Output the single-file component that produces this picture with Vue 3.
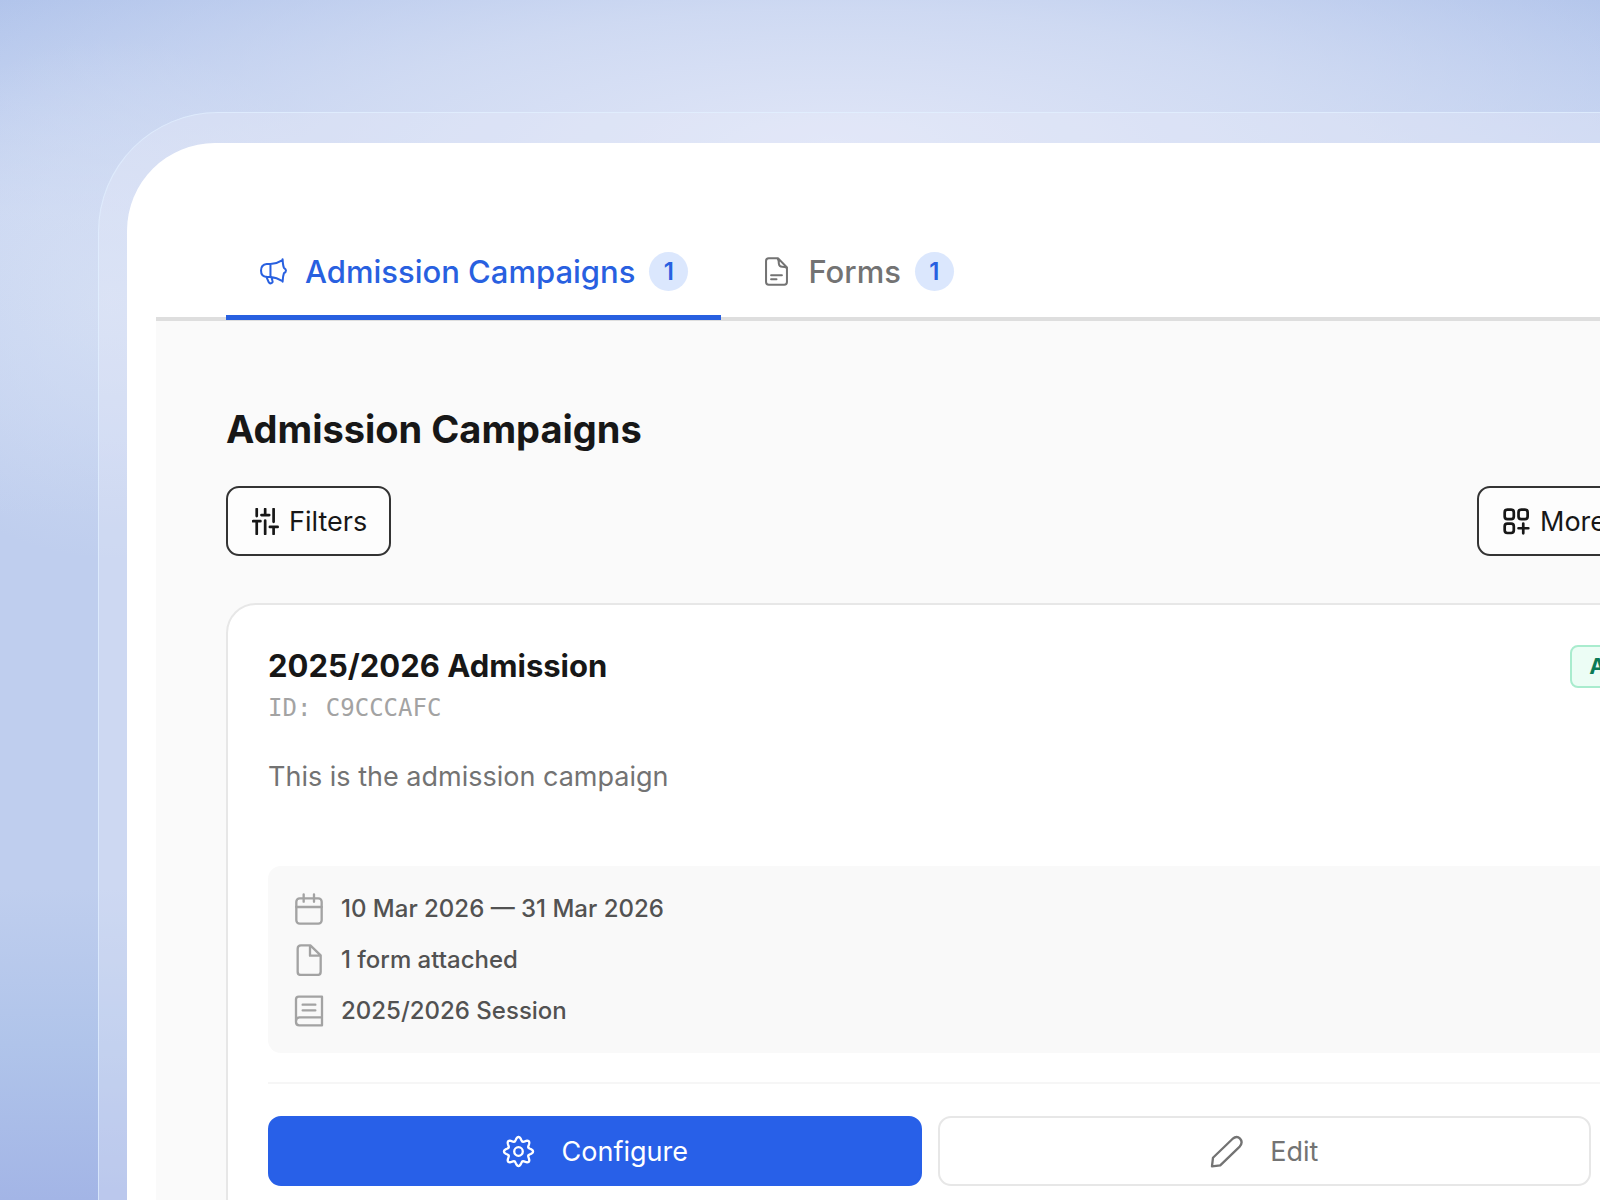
<template>
  <div class="stage">
    <div class="frame">
      <div class="window">
        <nav class="tabs">
          <button
            v-for="tab in tabs"
            :key="tab.name"
            type="button"
            class="tab"
            :class="{ active: tab.name === activeTab }"
            @click="activeTab = tab.name"
          >
            <svg v-if="tab.icon === 'megaphone'" class="icon-tab" viewBox="-4 -6 86 86">
              <path d="M30 15 H19 Q2 17 2 34 Q2 52 19 53 H30 Q48 54 66 66 M30 15 Q48 14 66 3 M30 15 V53 M66 1 Q67 20 70 26 Q76 30 76 34 Q76 39 70 42 Q67 50 66 67 M18 53 L25 69 Q28 74 34 71 Q38 68 36 64 L32 53" />
            </svg>
            <svg v-else class="icon-tab" viewBox="-10 -2 86 86">
              <path d="M10 2 H38 L64 29 V72 Q64 80 56 80 H10 Q2 80 2 72 V10 Q2 2 10 2 Z M36 3 Q40 6 40 18 Q41 27 50 27 Q61 27 63 31 M17 52 H49 M17 64 H33" />
            </svg>
            <span>{{ tab.name }}</span>
            <span class="count">{{ tab.count }}</span>
          </button>
        </nav>

        <main class="content">
          <h1>Admission Campaigns</h1>

          <div class="toolbar">
            <button type="button" class="tool">
              <svg class="icon-tool" viewBox="-3 -3 80 80">
                <path d="M11 0 V21 M0 36 H22 M11 36 V74 M36 0 V18 M25 18 H48 M36 34 V74 M61 0 V38 M50 53 H73 M61 53 V74" />
              </svg>
              Filters
            </button>
            <button type="button" class="tool more">
              <svg class="icon-tool" viewBox="-3 -3 80 80">
                <rect x="2" y="2" width="27" height="28" rx="8" />
                <rect x="43" y="2" width="27" height="28" rx="8" />
                <rect x="2" y="43" width="27" height="28" rx="8" />
                <path d="M57 43 V72 M43 57 H72" />
              </svg>
              More
            </button>
          </div>

          <article class="card">
            <header class="card-head">
              <div>
                <h2>{{ campaign.title }}</h2>
                <p class="id">ID: {{ campaign.id }}</p>
              </div>
              <span class="status">{{ campaign.status }}</span>
            </header>
            <p class="description">{{ campaign.description }}</p>

            <ul class="meta">
              <li>
                <svg class="icon-meta" viewBox="-8 -2 96 96">
                  <rect x="2" y="14" width="76" height="76" rx="10" />
                  <path d="M2 40 H78 M24 2 V24 M55 2 V24" />
                </svg>
                {{ campaign.dates }}
              </li>
              <li>
                <svg class="icon-meta" viewBox="-12 -2 96 96">
                  <path d="M12 2 H40 L71 32 V81 Q71 91 61 91 H12 Q2 91 2 81 V12 Q2 2 12 2 M39 3 V33 H70" />
                </svg>
                {{ campaign.forms }}
              </li>
              <li>
                <svg class="icon-meta" viewBox="-7 -3 96 96">
                  <path d="M80 64 V2 H10 Q2 2 2 10 V78 Q2 88 12 88 H80 V64 H12 Q2 65 2 76 M22 26 H60 M22 43 H60" />
                </svg>
                {{ campaign.session }}
              </li>
            </ul>

            <footer class="actions">
              <button type="button" class="action primary">
                <svg class="icon-action" viewBox="-50 -50 100 100">
                  <path :d="gearPath" />
                  <circle r="13" />
                </svg>
                Configure
              </button>
              <button type="button" class="action">
                <svg class="icon-action" viewBox="-4 -4 100 100">
                  <path d="M2 91 L5 65 L64 8 Q77 -3 87 7 Q97 18 86 31 L27 88 Z" />
                </svg>
                Edit
              </button>
            </footer>
          </article>
        </main>
      </div>
    </div>
  </div>
</template>

<script setup>
import { ref } from 'vue'

const activeTab = ref('Admission Campaigns')

const tabs = [
  { name: 'Admission Campaigns', count: 1, icon: 'megaphone' },
  { name: 'Forms', count: 1, icon: 'document' }
]

const campaign = {
  title: '2025/2026 Admission',
  id: 'C9CCCAFC',
  status: 'Active',
  description: 'This is the admission campaign',
  dates: '10 Mar 2026 — 31 Mar 2026',
  forms: '1 form attached',
  session: '2025/2026 Session'
}

// eight rounded teeth around the centre
const gearPath = (() => {
  const points = []
  for (let i = 0; i < 160; i++) {
    const a = (i / 160) * Math.PI * 2
    const r = 38 + 6 * Math.cos(8 * a)
    points.push(`${(r * Math.cos(a)).toFixed(1)} ${(r * Math.sin(a)).toFixed(1)}`)
  }
  return `M${points.join(' L')} Z`
})()
</script>

<style>
body {
  margin: 0;
}
</style>

<style scoped>
.stage {
  height: 100vh;
  overflow: hidden;
  box-sizing: border-box;
  padding: 112px 0 0 98px;
  font-family: Inter, "Liberation Sans", sans-serif;
  color: #171717;
  background:
    radial-gradient(ellipse 1050px 300px at 52% 12%, #dfe5f7 0%, rgba(214, 223, 244, 0.8) 45%, rgba(200, 213, 242, 0) 100%),
    radial-gradient(ellipse 260px 260px at 7% 25%, rgba(214, 224, 244, 0.8) 0%, rgba(205, 217, 243, 0) 100%),
    linear-gradient(180deg, #adc1ea 0%, #c6d4f1 18%, #c6d4f1 28%, #bfceee 43%, #bfceee 74%, #b0c4ea 87%, #a3b5e6 100%);
}

svg {
  flex: none;
  fill: none;
  stroke: currentColor;
  stroke-linecap: round;
  stroke-linejoin: round;
}

button {
  font-family: inherit;
  cursor: pointer;
}

h1,
h2,
p,
ul {
  margin: 0;
  padding: 0;
}

/* the frame runs off the right edge of the stage */
.frame {
  margin-right: -247px;
  padding: 30px 28px 0;
  border: 1px solid rgba(225, 240, 255, 0.7);
  border-bottom: 0;
  border-radius: 120px 120px 0 0;
  background: rgba(232, 234, 250, 0.35);
}

.window {
  padding: 0 29px;
  border-radius: 88px 88px 0 0;
  background: #fff;
}

.tabs {
  display: flex;
  gap: 8px;
  padding: 85px 70px 0;
  border-bottom: 4px solid #dedede;
}

/* the tab underline lies over the bar's own border */
.tab {
  display: flex;
  align-items: center;
  height: 92px;
  margin-bottom: -3px;
  padding: 0 33px;
  border: 0;
  border-bottom: 5px solid transparent;
  background: none;
  color: #737373;
  font-size: 31px;
  font-weight: 500;
}

.tab.active {
  border-bottom-color: #2860e0;
  color: #2860e0;
}

.icon-tab {
  width: 29px;
  height: 29px;
  margin-right: 17px;
  stroke-width: 6;
}

.count {
  width: 39px;
  margin-left: 14px;
  border-radius: 50%;
  background: #dbe7fd;
  color: #2860e0;
  font-size: 24px;
  font-weight: 600;
  line-height: 39px;
  text-align: center;
}

.content {
  padding: 82px 70px 60px;
  background: #fafafa;
}

h1 {
  font-size: 38px;
  font-weight: 700;
  line-height: 52px;
}

.toolbar {
  display: flex;
  justify-content: space-between;
  margin: 31px 0 47px;
}

.tool {
  display: flex;
  align-items: center;
  gap: 10px;
  height: 70px;
  padding: 0 22px 0 24px;
  border: 2px solid #333;
  border-radius: 13px;
  background: #fdfdfd;
  color: #171717;
  font-size: 27px;
}

.more {
  width: 242px;
}

.icon-tool {
  width: 27px;
  height: 27px;
  stroke-width: 8;
}

.card {
  padding: 40px;
  border: 2px solid #e7e7e7;
  border-radius: 30px;
  background: #fff;
}

.card-head {
  display: flex;
  align-items: flex-start;
  justify-content: space-between;
}

h2 {
  font-size: 31px;
  font-weight: 700;
  line-height: 42px;
}

.id {
  color: #a3a3a3;
  font-family: "DejaVu Sans Mono", monospace;
  font-size: 24px;
  line-height: 42px;
}

.status {
  padding: 0 17px;
  border: 2px solid #a9ecce;
  border-radius: 8px;
  background: #ecfdf5;
  color: #0b7a55;
  font-size: 22px;
  font-weight: 700;
  line-height: 39px;
}

.description {
  margin-top: 27px;
  color: #737373;
  font-size: 27px;
  line-height: 42px;
}

.meta {
  margin-top: 68px;
  padding: 17px 25px;
  border-radius: 13px;
  background: #f9f9f9;
  color: #525252;
  font-size: 24px;
  font-weight: 500;
  list-style: none;
}

.meta li {
  display: flex;
  align-items: center;
  gap: 16px;
  height: 51px;
}

.icon-meta {
  width: 32px;
  height: 32px;
  color: #a3a3a3;
  stroke-width: 7;
}

.actions {
  display: grid;
  grid-template-columns: 1fr 1fr 70px;
  gap: 16px;
  margin-top: 29px;
  padding-top: 32px;
  border-top: 2px solid #f6f6f6;
}

.action {
  display: flex;
  align-items: center;
  justify-content: center;
  gap: 27px;
  height: 70px;
  border: 2px solid #e7e7e7;
  border-radius: 13px;
  background: #fff;
  color: #737373;
  font-size: 27px;
}

.action.primary {
  border-color: #2860e8;
  background: #2860e8;
  color: #fff;
}

.icon-action {
  width: 33px;
  height: 33px;
  stroke-width: 7;
}
</style>
